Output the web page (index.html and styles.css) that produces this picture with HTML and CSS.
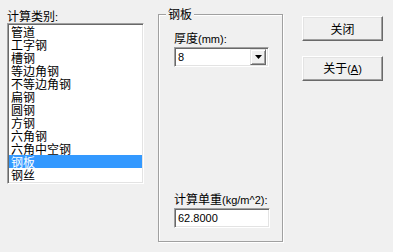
FILE: index.html
```html
<!DOCTYPE html>
<html lang="zh-CN">
<head>
<meta charset="utf-8">
<title>计算</title>
<link rel="stylesheet" href="styles.css">
</head>
<body>
<div class="dialog">
  <div class="left">
    <div class="caption">计算类别<span class="lat">:</span></div>
    <ul class="list">
      <li>管道</li>
      <li>工字钢</li>
      <li>槽钢</li>
      <li>等边角钢</li>
      <li>不等边角钢</li>
      <li>扁钢</li>
      <li>圆钢</li>
      <li>方钢</li>
      <li>六角钢</li>
      <li>六角中空钢</li>
      <li class="selected">钢板</li>
      <li>钢丝</li>
    </ul>
  </div>
  <div class="group">
    <span class="legend">钢板</span>
    <div class="field">
      <div class="field-label">厚度<span class="lat">(mm):</span></div>
      <div class="combo">
        <span class="value lat">8</span>
        <span class="drop"><svg width="7" height="4" viewBox="0 0 7 4"><path d="M0 0H7L3.5 4Z" fill="#000"/></svg></span>
      </div>
    </div>
    <div class="field bottom">
      <div class="field-label">计算单重<span class="lat">(kg/m^2):</span></div>
      <div class="edit lat">62.8000</div>
    </div>
  </div>
  <div class="buttons">
    <button class="btn">关闭</button>
    <button class="btn">关于<span class="lat">(<u>A</u>)</span></button>
  </div>
</div>
</body>
</html>
```
FILE: styles.css
```css
* { box-sizing: border-box; }
html, body {
  margin: 0;
  padding: 0;
  background: #f0f0f0;
}
body {
  width: 393px;
  height: 252px;
  font-family: "Noto Sans CJK SC", "Liberation Sans", sans-serif;
  font-size: 12px;
  color: #000;
}
.lat {
  font-family: "Liberation Sans", "Noto Sans CJK SC", sans-serif;
  font-size: 11px;
}
.dialog {
  display: flex;
  align-items: flex-start;
  padding: 9px 0 0 7px;
}
.left {
  width: 137px;
  display: flex;
  flex-direction: column;
}
.caption {
  height: 14px;
  line-height: 14px;
  padding-left: 0;
}
.list {
  list-style: none;
  margin: 0;
  padding: 1px 0 0 0;
  height: 161px;
  background: #fff;
  border: 1px solid;
  border-color: #a0a0a0 #fff #fff #a0a0a0;
  box-shadow: inset 1px 1px 0 #696969, inset -1px -1px 0 #e3e3e3;
  padding-left: 1px;
  padding-right: 1px;
}
.list li {
  height: 13px;
  line-height: 13px;
  padding-left: 2px;
  white-space: nowrap;
}
.list li.selected {
  background: #3399ff;
  color: #fff;
}
.group {
  position: relative;
  margin: 5px 0 0 14px;
  width: 125px;
  height: 228px;
  border: 1px solid #a0a0a0;
  box-shadow: inset 1px 1px 0 #fff, 1px 1px 0 #fff;
  padding: 16px 0 13px 15px;
  display: flex;
  flex-direction: column;
}
.legend {
  position: absolute;
  top: -8px;
  left: 7px;
  padding: 0 2px;
  line-height: 14px;
  background: #f0f0f0;
}
.field {
  display: flex;
  flex-direction: column;
}
.field.bottom {
  margin-top: auto;
}
.field-label {
  height: 14px;
  line-height: 14px;
  margin-bottom: 2px;
  white-space: nowrap;
}
.combo {
  width: 95px;
  height: 20px;
  background: #fff;
  border: 1px solid;
  border-color: #a0a0a0 #fff #fff #a0a0a0;
  box-shadow: inset 1px 1px 0 #696969, inset -1px -1px 0 #e3e3e3;
  display: flex;
  align-items: center;
  padding: 2px 2px 2px 2px;
}
.combo .value {
  flex: 1;
  line-height: 14px;
  padding-left: 1px;
}
.drop {
  width: 16px;
  height: 16px;
  background: #f0f0f0;
  border: 1px solid;
  border-color: #e3e3e3 #696969 #696969 #e3e3e3;
  box-shadow: inset 1px 1px 0 #fff, inset -1px -1px 0 #a0a0a0;
  display: flex;
  align-items: center;
  justify-content: center;
}
.edit {
  width: 96px;
  height: 20px;
  line-height: 16px;
  background: #fff;
  border: 1px solid;
  border-color: #a0a0a0 #fff #fff #a0a0a0;
  box-shadow: inset 1px 1px 0 #696969, inset -1px -1px 0 #e3e3e3;
  padding: 1px 2px 1px 3px;
}
.buttons {
  margin: 7px 0 0 19px;
  display: flex;
  flex-direction: column;
  gap: 15px;
}
.btn {
  width: 81px;
  height: 25px;
  margin: 0;
  padding: 0;
  font-family: "Noto Sans CJK SC", "Liberation Sans", sans-serif;
  font-size: 12px;
  color: #000;
  background: #f0f0f0;
  border: 1px solid;
  border-color: #fff #696969 #696969 #fff;
  box-shadow: inset -1px -1px 0 #a0a0a0, inset 1px 1px 0 #e3e3e3;
  border-radius: 0;
  line-height: 14px;
}
.btn u {
  text-decoration: underline;
}
```
